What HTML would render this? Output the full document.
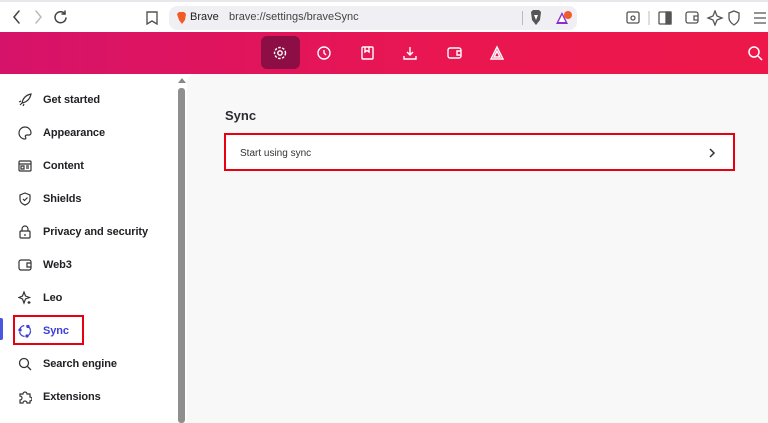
<!DOCTYPE html>
<html><head><style>
*{margin:0;padding:0;box-sizing:border-box}
body{width:768px;height:423px;overflow:hidden;background:#fff;font-family:"Liberation Sans",sans-serif;position:relative}
.top{position:absolute;left:0;top:0;width:768px;height:32px;background:#fff;border-top:2px solid #e8e8ec}
.url{position:absolute;left:169px;top:4px;width:408px;height:24px;background:#f0f0f4;border-radius:8px}
.banner{position:absolute;left:0;top:32px;width:768px;height:42px;background:linear-gradient(90deg,#d6136a,#ea1650 60%,#ed1849)}
.sel{position:absolute;left:261px;top:36px;width:39px;height:33px;background:#8c0e45;border-radius:6px}
svg{position:absolute}
.side{position:absolute;left:0;top:74px;width:178px;height:349px}
.item{position:absolute;left:43px;font-size:11px;color:#202124;font-weight:bold;letter-spacing:-0.1px}
.ic{position:absolute;left:18px;width:14px;height:14px}
.scroll{position:absolute;left:178px;top:88px;width:7px;height:335px;background:#8f8f8f;border-radius:3px}
.main{position:absolute;left:187px;top:74px;width:581px;height:349px;background:#f8f8f8;border-top-left-radius:8px}
</style></head><body>
<div class="top">
<svg style="left:10px;top:7px" width="60" height="16" viewBox="0 0 60 16" fill="none" stroke-width="1.5" stroke-linecap="round">
<path d="M9 2L4 8l5 6" stroke="#444"/><path d="M26 2l5 6-5 6" stroke="#bbb"/>
<path d="M55 5a5.5 5.5 0 1 0 1 4" stroke="#444"/><path d="M55 2v3h-3" stroke="#444"/></svg>
<svg style="left:146px;top:9px" width="12" height="14" viewBox="0 0 12 14" fill="none" stroke="#555" stroke-width="1.4"><path d="M1 1h10v12l-5-3-5 3z"/></svg>
<div class="url">
<svg style="left:7px;top:6px" width="11" height="12" viewBox="0 0 11 12"><path d="M1 2l2-2h5l2 2-1 6-3 4-3-4z" fill="#f15a24"/></svg>
<span style="position:absolute;left:21px;top:5px;font-size:11px;color:#222">Brave</span>
<span style="position:absolute;left:60px;top:5px;font-size:11px;color:#444">brave://settings/braveSync</span>
<div style="position:absolute;left:353px;top:5px;width:1px;height:14px;background:#bbb"></div>
<svg style="left:360px;top:4px" width="14" height="16" viewBox="0 0 14 16"><path d="M2 2l2-2h6l2 2-1 8-4 5-4-5z" fill="#555"/><path d="M5 5h4l-2 5z" fill="#fff"/></svg>
<svg style="left:386px;top:5px" width="18" height="15" viewBox="0 0 18 15"><path d="M7 1L1 13h12z" fill="#8b2bd0"/><path d="M7 4l-3.5 7h7z" fill="#fff"/><circle cx="13" cy="4" r="4" fill="#f25b2a"/></svg>
</div>
<svg style="left:626px;top:8px" width="140" height="16" viewBox="0 0 140 16" fill="none" stroke="#555" stroke-width="1.3">
<rect x="1" y="2" width="12" height="11" rx="1.5"/><circle cx="7" cy="8" r="2"/>
<path d="M23 1v14" stroke="#ccc"/>
<rect x="33" y="2" width="12" height="12" rx="1"/><rect x="40" y="2" width="5" height="12" fill="#555"/>
<rect x="60" y="2" width="12" height="11" rx="2"/><path d="M72 6h-4v4h4"/>
<path d="M89 1l2 5 5 2-5 2-2 5-2-5-5-2 5-2z"/>
<path d="M108 1l5 2v5c0 3-2 5-5 7-3-2-5-4-5-7V3z"/>
<path d="M128 3h12M128 8h12M128 13h12"/></svg>
</div>
<div class="banner"></div>
<div class="sel"></div>
<svg style="left:273px;top:45px" width="240" height="16" viewBox="0 0 240 16" fill="none" stroke="#fff" stroke-width="1.4">
<circle cx="7" cy="8" r="2.2"/><circle cx="7" cy="8" r="5.5" stroke-dasharray="2.5 1.5"/>
<circle cx="51" cy="8" r="6"/><path d="M51 5v3l2 2"/>
<rect x="89" y="2" width="11" height="12" rx="1"/><path d="M92 2v5l2-1.5 2 1.5V2"/>
<path d="M137 2v8M134 7l3 3 3-3M131 11v3h12v-3"/>
<rect x="175" y="3" width="13" height="10" rx="2"/><path d="M188 6h-4v4h4"/>
<path d="M224 2l-6 12h12z"/><path d="M224 6l-3 6h6z"/></svg>
<svg style="left:747px;top:45px" width="16" height="16" viewBox="0 0 16 16" fill="none" stroke="#fff" stroke-width="1.5"><circle cx="7" cy="7" r="5"/><path d="M11 11l4 4"/></svg>
<div style="position:absolute;left:178px;top:78px;width:0;height:0;border-left:4px solid transparent;border-right:4px solid transparent;border-bottom:5px solid #888"></div>
<div class="side">
<svg class="ic" style="top:19px" viewBox="0 0 14 14" fill="none" stroke="#333" stroke-width="1.2"><path d="M4 10c1-5 4-8 9-9-1 5-4 8-9 9zM3 8L1 9M6 11l-1 2M2 12l2-2"/></svg>
<div class="item" style="top:20px">Get started</div>
<svg class="ic" style="top:52px" viewBox="0 0 14 14" fill="none" stroke="#333" stroke-width="1.2"><path d="M7 1a6 6 0 1 0 0 12c1 0 1-1 .5-2s0-2 1.5-2h2a2 2 0 0 0 2-2A6 6 0 0 0 7 1z"/></svg>
<div class="item" style="top:53px">Appearance</div>
<svg class="ic" style="top:85px" viewBox="0 0 14 14" fill="none" stroke="#333" stroke-width="1.2"><rect x="1" y="2" width="12" height="10" rx="1"/><path d="M1 5h12M3 7h3v3H3zM8 7h3M8 9h3"/></svg>
<div class="item" style="top:86px">Content</div>
<svg class="ic" style="top:118px" viewBox="0 0 14 14" fill="none" stroke="#333" stroke-width="1.2"><path d="M7 1l5 2v4c0 3-2 5-5 6-3-1-5-3-5-6V3zM5 7l1.5 1.5L9.5 5.5"/></svg>
<div class="item" style="top:119px">Shields</div>
<svg class="ic" style="top:151px" viewBox="0 0 14 14" fill="none" stroke="#333" stroke-width="1.2"><rect x="2" y="6" width="10" height="7" rx="1"/><path d="M4 6V4a3 3 0 0 1 6 0v2M7 9v2"/></svg>
<div class="item" style="top:152px">Privacy and security</div>
<svg class="ic" style="top:184px" viewBox="0 0 14 14" fill="none" stroke="#333" stroke-width="1.2"><rect x="1" y="2" width="12" height="10" rx="2"/><path d="M13 5H9v4h4"/></svg>
<div class="item" style="top:185px">Web3</div>
<svg class="ic" style="top:217px" viewBox="0 0 14 14" fill="none" stroke="#333" stroke-width="1.2"><path d="M6 1l1.5 4 4 1.5-4 1.5L6 12 4.5 8 1 6.5 4.5 5zM11 10v3M9.5 11.5h3"/></svg>
<div class="item" style="top:218px">Leo</div>
<div style="position:absolute;left:0;top:244px;width:3px;height:22px;background:#4a55e0;border-radius:0 2px 2px 0"></div>
<div style="position:absolute;left:13px;top:241px;width:71px;height:30px;border:2px solid #e8000f"></div>
<svg class="ic" style="top:250px" viewBox="0 0 14 14" fill="none" stroke="#3b3fd8" stroke-width="1.3"><circle cx="7" cy="7" r="5.5" stroke-dasharray="7 2"/><circle cx="2" cy="6" r="1" fill="#3b3fd8"/><circle cx="10" cy="2.5" r="1" fill="#3b3fd8"/><circle cx="9" cy="12" r="1" fill="#3b3fd8"/></svg>
<div class="item" style="top:251px;color:#3b3fd8">Sync</div>
<svg class="ic" style="top:283px" viewBox="0 0 14 14" fill="none" stroke="#333" stroke-width="1.3"><circle cx="6" cy="6" r="4.5"/><path d="M9.5 9.5L13 13"/></svg>
<div class="item" style="top:284px">Search engine</div>
<svg class="ic" style="top:316px" viewBox="0 0 14 14" fill="none" stroke="#333" stroke-width="1.2"><path d="M2 4h3a2 2 0 1 1 4 0h3v3a2 2 0 1 1 0 4v2H9a2 2 0 1 0-4 0H2v-3a2 2 0 1 0 0-4z"/></svg>
<div class="item" style="top:317px">Extensions</div>
</div>
<div class="scroll"></div>
<div class="main">
<div style="position:absolute;left:38px;top:34px;font-size:13px;font-weight:bold;color:#2b2b33">Sync</div>
<div style="position:absolute;left:37px;top:59px;width:511px;height:38px;background:#fff;border:2px solid #e8000f"></div>
<div style="position:absolute;left:53px;top:74px;font-size:10px;color:#333">Start using sync</div>
<svg style="left:521px;top:74px" width="8" height="10" viewBox="0 0 8 10" fill="none" stroke="#333" stroke-width="1.5"><path d="M2 1l4 4-4 4"/></svg>
</div>
</body></html>
